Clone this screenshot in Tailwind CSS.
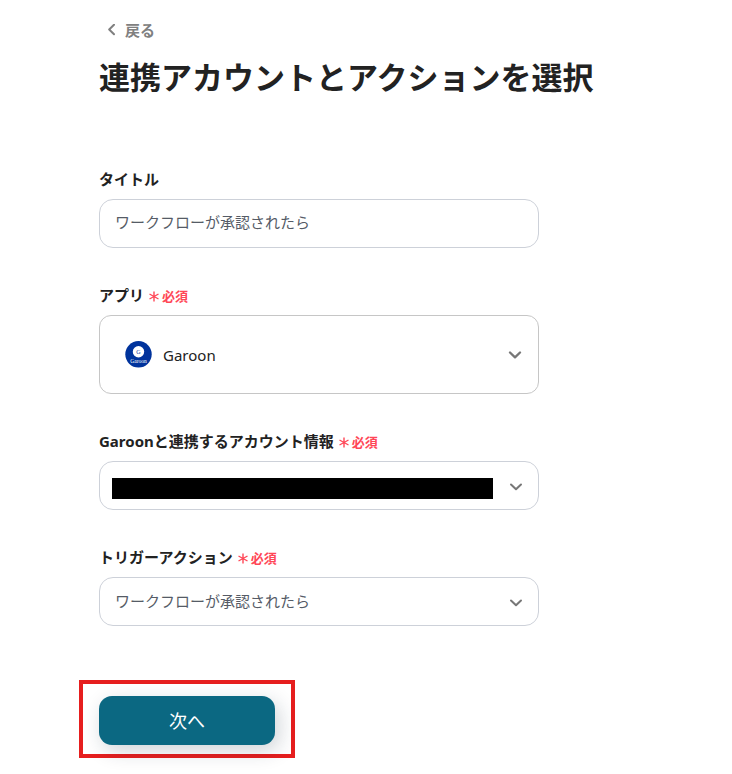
<!DOCTYPE html>
<html lang="ja">
<head>
<meta charset="utf-8">
<meta name="viewport" content="width=device-width, initial-scale=1">
<title>連携アカウントとアクションを選択</title>
<script src="https://cdn.jsdelivr.net/npm/@tailwindcss/browser@4"></script>
</head>
<body class="bg-white text-[#222222] font-['Noto_Sans','Noto_Sans_CJK_JP',sans-serif]">
<main class="ml-[99px] mr-8 pt-[18px] pb-4">
  <a href="#" class="ml-2 inline-flex h-6 items-center gap-[9px] text-[15px] leading-6 font-bold text-[#808080]">
    <svg class="h-3 w-[9px]" viewBox="0 0 9 12" fill="none" stroke="currentColor" stroke-width="2" stroke-linecap="round" stroke-linejoin="round" aria-hidden="true"><path d="M7 .7 2.200 5.500 7 10.300"/></svg>
    戻る
  </a>
  <h1 class="mt-[11px] text-[31px] leading-12 font-bold">連携アカウントとアクションを選択</h1>

  <form class="mt-[66px] max-w-[440px]">
    <div class="flex flex-col gap-[35px]">
      <div>
        <label for="title" class="mb-2 flex h-6 items-start text-[15px] leading-6 font-bold">タイトル</label>
        <input id="title" type="text" value="ワークフローが承認されたら" class="block h-[49px] w-full rounded-[14px] border border-[#cdd1d9] bg-white px-[15px] pb-1 text-[15px] text-[#555b66]">
      </div>

      <div>
        <label for="app" class="mb-2 flex h-6 items-start gap-[5px] text-[15px] leading-6 font-bold">アプリ
          <span class="flex items-center gap-[3px] text-[13px] leading-[26px] text-[#ff4757]"><svg class="h-3 w-[10px]" viewBox="0 0 10 12" stroke="currentColor" stroke-width="1.400" aria-hidden="true"><path d="M5 1.500v10M.5 4l9 5M9.500 4l-9 5"/></svg>必須</span>
        </label>
        <div class="relative">
          <select id="app" class="block h-[79px] w-full appearance-none rounded-xl border border-[#c6c6c6] bg-white pt-[2px] pr-12 pl-[63px] text-[15px] text-[#222222]"><option>Garoon</option></select>
          <svg class="pointer-events-none absolute top-[26px] left-[26px] size-[27px]" viewBox="0 0 27 27" aria-hidden="true">
            <circle cx="13.500" cy="13.300" r="13.200" fill="#00339c"/>
            <circle cx="13.500" cy="10.800" r="5.700" fill="#fff"/>
            <text x="13.500" y="13" text-anchor="middle" font-family="Liberation Serif, serif" font-size="6" fill="#00339c">G</text>
            <text x="13.500" y="21.600" text-anchor="middle" font-family="Liberation Serif, serif" font-size="5.500" fill="#fff">Garoon</text>
          </svg>
          <svg class="pointer-events-none absolute top-9 right-[17px] h-2 w-[14px] text-[#777777]" viewBox="0 0 14 8" fill="none" stroke="currentColor" stroke-width="2.300" stroke-linecap="round" stroke-linejoin="round" aria-hidden="true"><path d="M2 1.500 7 6.300 12 1.500"/></svg>
        </div>
      </div>

      <div>
        <label for="account" class="mb-2 flex h-6 items-start gap-[5px] text-[15px] leading-6 font-bold">Garoonと連携するアカウント情報
          <span class="flex items-center gap-[3px] text-[13px] leading-[26px] text-[#ff4757]"><svg class="h-3 w-[10px]" viewBox="0 0 10 12" stroke="currentColor" stroke-width="1.400" aria-hidden="true"><path d="M5 1.500v10M.5 4l9 5M9.500 4l-9 5"/></svg>必須</span>
        </label>
        <div class="relative">
          <select id="account" class="block h-[49px] w-full appearance-none rounded-[14px] border border-[#cdd1d9] bg-white pr-12 pl-[15px] text-[15px]"><option></option></select>
          <div class="pointer-events-none absolute top-[17px] right-[46px] left-[13px] h-[21px] bg-black"></div>
          <svg class="pointer-events-none absolute top-[22px] right-4 h-2 w-[14px] text-[#777777]" viewBox="0 0 14 8" fill="none" stroke="currentColor" stroke-width="2" stroke-linecap="round" stroke-linejoin="round" aria-hidden="true"><path d="M2 1.500 7 6.300 12 1.500"/></svg>
        </div>
      </div>

      <div>
        <label for="trigger" class="mb-2 flex h-6 items-start gap-[5px] text-[15px] leading-6 font-bold">トリガーアクション
          <span class="flex items-center gap-[3px] text-[13px] leading-[26px] text-[#ff4757]"><svg class="h-3 w-[10px]" viewBox="0 0 10 12" stroke="currentColor" stroke-width="1.400" aria-hidden="true"><path d="M5 1.500v10M.5 4l9 5M9.500 4l-9 5"/></svg>必須</span>
        </label>
        <div class="relative">
          <select id="trigger" class="block h-[49px] w-full appearance-none rounded-[14px] border border-[#cdd1d9] bg-white pr-12 pl-[15px] text-[15px] text-[#555b66]"><option>ワークフローが承認されたら</option></select>
          <svg class="pointer-events-none absolute top-[22px] right-4 h-2 w-[14px] text-[#777777]" viewBox="0 0 14 8" fill="none" stroke="currentColor" stroke-width="2" stroke-linecap="round" stroke-linejoin="round" aria-hidden="true"><path d="M2 1.500 7 6.300 12 1.500"/></svg>
        </div>
      </div>
    </div>

    <div class="mt-[54px] -ml-5 inline-block border-4 border-[#e61e1e] px-4 pt-3 pb-[9px]">
      <button type="button" class="block h-[49px] w-44 rounded-[13px] bg-[#0b6882] text-lg text-white shadow-[4px_6px_20px_rgba(20,40,60,0.2)]">次へ</button>
    </div>
  </form>
</main>
</body>
</html>
